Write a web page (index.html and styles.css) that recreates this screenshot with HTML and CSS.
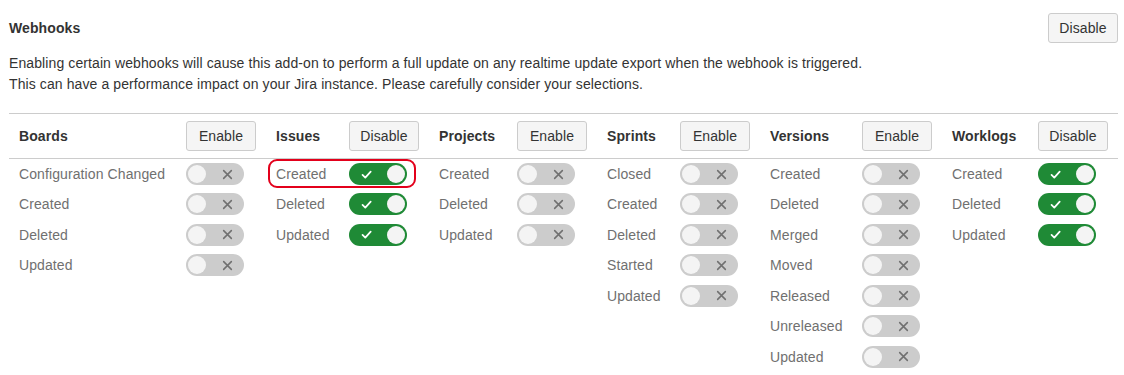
FILE: index.html
```html
<!DOCTYPE html>
<html>
<head>
<meta charset="utf-8">
<link rel="stylesheet" href="styles.css">
</head>
<body>
<div class="page">
  <div class="top">
    <h2 class="title">Webhooks</h2>
    <button class="btn">Disable</button>
  </div>
  <p class="desc">Enabling certain webhooks will cause this add-on to perform a full update on any realtime update export when the webhook is triggered.<br>This can have a performance impact on your Jira instance. Please carefully consider your selections.</p>
  <table class="hooks">
    <colgroup>
      <col class="c1"><col class="cb"><col class="c3"><col class="cb"><col class="c5"><col class="cb">
      <col class="c7"><col class="cb"><col class="c9"><col class="cb"><col class="c11"><col class="cb">
    </colgroup>
    <thead>
      <tr>
        <th>Boards</th><th><button class="btn">Enable</button></th>
        <th>Issues</th><th><button class="btn">Disable</button></th>
        <th>Projects</th><th><button class="btn">Enable</button></th>
        <th>Sprints</th><th><button class="btn">Enable</button></th>
        <th>Versions</th><th><button class="btn">Enable</button></th>
        <th>Worklogs</th><th><button class="btn">Disable</button></th>
      </tr>
    </thead>
    <tbody>
      <tr>
        <td>Configuration Changed</td><td><span class="tg off"><span class="knob"></span><svg class="ic" viewBox="0 0 10 10"><path d="M1.5 1.5L8.5 8.5M8.5 1.5L1.5 8.5"/></svg></span></td>
        <td class="hl-cell"><span class="hl"></span>Created</td><td><span class="tg on"><svg class="ic" viewBox="0 0 10 10"><path d="M1.4 5.4L3.9 7.8L8.8 2.4"/></svg><span class="knob"></span></span></td>
        <td>Created</td><td><span class="tg off"><span class="knob"></span><svg class="ic" viewBox="0 0 10 10"><path d="M1.5 1.5L8.5 8.5M8.5 1.5L1.5 8.5"/></svg></span></td>
        <td>Closed</td><td><span class="tg off"><span class="knob"></span><svg class="ic" viewBox="0 0 10 10"><path d="M1.5 1.5L8.5 8.5M8.5 1.5L1.5 8.5"/></svg></span></td>
        <td>Created</td><td><span class="tg off"><span class="knob"></span><svg class="ic" viewBox="0 0 10 10"><path d="M1.5 1.5L8.5 8.5M8.5 1.5L1.5 8.5"/></svg></span></td>
        <td>Created</td><td><span class="tg on"><svg class="ic" viewBox="0 0 10 10"><path d="M1.4 5.4L3.9 7.8L8.8 2.4"/></svg><span class="knob"></span></span></td>
      </tr>
      <tr>
        <td>Created</td><td><span class="tg off"><span class="knob"></span><svg class="ic" viewBox="0 0 10 10"><path d="M1.5 1.5L8.5 8.5M8.5 1.5L1.5 8.5"/></svg></span></td>
        <td>Deleted</td><td><span class="tg on"><svg class="ic" viewBox="0 0 10 10"><path d="M1.4 5.4L3.9 7.8L8.8 2.4"/></svg><span class="knob"></span></span></td>
        <td>Deleted</td><td><span class="tg off"><span class="knob"></span><svg class="ic" viewBox="0 0 10 10"><path d="M1.5 1.5L8.5 8.5M8.5 1.5L1.5 8.5"/></svg></span></td>
        <td>Created</td><td><span class="tg off"><span class="knob"></span><svg class="ic" viewBox="0 0 10 10"><path d="M1.5 1.5L8.5 8.5M8.5 1.5L1.5 8.5"/></svg></span></td>
        <td>Deleted</td><td><span class="tg off"><span class="knob"></span><svg class="ic" viewBox="0 0 10 10"><path d="M1.5 1.5L8.5 8.5M8.5 1.5L1.5 8.5"/></svg></span></td>
        <td>Deleted</td><td><span class="tg on"><svg class="ic" viewBox="0 0 10 10"><path d="M1.4 5.4L3.9 7.8L8.8 2.4"/></svg><span class="knob"></span></span></td>
      </tr>
      <tr>
        <td>Deleted</td><td><span class="tg off"><span class="knob"></span><svg class="ic" viewBox="0 0 10 10"><path d="M1.5 1.5L8.5 8.5M8.5 1.5L1.5 8.5"/></svg></span></td>
        <td>Updated</td><td><span class="tg on"><svg class="ic" viewBox="0 0 10 10"><path d="M1.4 5.4L3.9 7.8L8.8 2.4"/></svg><span class="knob"></span></span></td>
        <td>Updated</td><td><span class="tg off"><span class="knob"></span><svg class="ic" viewBox="0 0 10 10"><path d="M1.5 1.5L8.5 8.5M8.5 1.5L1.5 8.5"/></svg></span></td>
        <td>Deleted</td><td><span class="tg off"><span class="knob"></span><svg class="ic" viewBox="0 0 10 10"><path d="M1.5 1.5L8.5 8.5M8.5 1.5L1.5 8.5"/></svg></span></td>
        <td>Merged</td><td><span class="tg off"><span class="knob"></span><svg class="ic" viewBox="0 0 10 10"><path d="M1.5 1.5L8.5 8.5M8.5 1.5L1.5 8.5"/></svg></span></td>
        <td>Updated</td><td><span class="tg on"><svg class="ic" viewBox="0 0 10 10"><path d="M1.4 5.4L3.9 7.8L8.8 2.4"/></svg><span class="knob"></span></span></td>
      </tr>
      <tr>
        <td>Updated</td><td><span class="tg off"><span class="knob"></span><svg class="ic" viewBox="0 0 10 10"><path d="M1.5 1.5L8.5 8.5M8.5 1.5L1.5 8.5"/></svg></span></td>
        <td></td><td></td>
        <td></td><td></td>
        <td>Started</td><td><span class="tg off"><span class="knob"></span><svg class="ic" viewBox="0 0 10 10"><path d="M1.5 1.5L8.5 8.5M8.5 1.5L1.5 8.5"/></svg></span></td>
        <td>Moved</td><td><span class="tg off"><span class="knob"></span><svg class="ic" viewBox="0 0 10 10"><path d="M1.5 1.5L8.5 8.5M8.5 1.5L1.5 8.5"/></svg></span></td>
        <td></td><td></td>
      </tr>
      <tr>
        <td></td><td></td>
        <td></td><td></td>
        <td></td><td></td>
        <td>Updated</td><td><span class="tg off"><span class="knob"></span><svg class="ic" viewBox="0 0 10 10"><path d="M1.5 1.5L8.5 8.5M8.5 1.5L1.5 8.5"/></svg></span></td>
        <td>Released</td><td><span class="tg off"><span class="knob"></span><svg class="ic" viewBox="0 0 10 10"><path d="M1.5 1.5L8.5 8.5M8.5 1.5L1.5 8.5"/></svg></span></td>
        <td></td><td></td>
      </tr>
      <tr>
        <td></td><td></td>
        <td></td><td></td>
        <td></td><td></td>
        <td></td><td></td>
        <td>Unreleased</td><td><span class="tg off"><span class="knob"></span><svg class="ic" viewBox="0 0 10 10"><path d="M1.5 1.5L8.5 8.5M8.5 1.5L1.5 8.5"/></svg></span></td>
        <td></td><td></td>
      </tr>
      <tr>
        <td></td><td></td>
        <td></td><td></td>
        <td></td><td></td>
        <td></td><td></td>
        <td>Updated</td><td><span class="tg off"><span class="knob"></span><svg class="ic" viewBox="0 0 10 10"><path d="M1.5 1.5L8.5 8.5M8.5 1.5L1.5 8.5"/></svg></span></td>
        <td></td><td></td>
      </tr>
    </tbody>
  </table>
</div>
</body>
</html>
```
FILE: styles.css
```css
html, body {
  margin: 0;
  padding: 0;
  background: #fff;
}
body {
  font-family: "Liberation Sans", Arial, sans-serif;
  font-size: 14px;
  letter-spacing: 0.1px;
  color: #333;
}
.page {
  margin: 0 6px 0 9px;
  padding-top: 13px;
}
.top {
  display: flex;
  justify-content: space-between;
  align-items: center;
  height: 30px;
}
.title {
  margin: 0;
  font-size: 14px;
  font-weight: bold;
  color: #333;
}
.btn {
  width: 70px;
  height: 30px;
  box-sizing: border-box;
  padding: 0;
  margin: 0;
  background: #f5f5f5;
  border: 1px solid #ccc;
  border-radius: 3px;
  font-family: "Liberation Sans", Arial, sans-serif;
  font-size: 14px;
  letter-spacing: 0.1px;
  color: #333;
  display: block;
}
.desc {
  margin: 10px 0 0;
  line-height: 21px;
  color: #333;
}
.hooks {
  margin-top: 18px;
  width: 1109px;
  table-layout: fixed;
  border-collapse: collapse;
}
.c1 { width: 167px; }
.cb { width: 90px; }
.c3 { width: 73px; }
.c5 { width: 78px; }
.c7 { width: 73px; }
.c9 { width: 92px; }
.c11 { width: 86px; }
.hooks thead tr {
  border-top: 1px solid #ccc;
  border-bottom: 1px solid #ccc;
}
.hooks th {
  text-align: left;
  font-weight: bold;
  color: #333;
  padding: 7px 10px;
  height: 30px;
  white-space: nowrap;
}
.hooks td {
  padding: 0 10px;
  height: 30.5px;
  vertical-align: middle;
  color: #707070;
  white-space: nowrap;
}
.hooks tbody tr:first-child td {
  height: 30px;
}
.tg {
  display: flex;
  align-items: center;
  justify-content: space-between;
  width: 58px;
  height: 22px;
  box-sizing: border-box;
  border-radius: 11px;
  padding: 2px;
}
.tg.off {
  background: #ccc;
}
.tg.on {
  background: #1f8a36;
}
.knob {
  width: 18px;
  height: 18px;
  border-radius: 50%;
  background: #f4f4f4;
}
.ic {
  width: 11px;
  height: 11px;
  fill: none;
  stroke-width: 1.4;
  stroke-linecap: round;
  stroke-linejoin: round;
}
.tg.off .ic {
  stroke: #707070;
  margin-right: 9px;
}
.tg.on .ic {
  stroke: #fff;
  margin-left: 10px;
  stroke-width: 1.6;
}
.hl-cell {
  position: relative;
}
.hl {
  position: absolute;
  left: 2px;
  top: 0;
  width: 148px;
  height: 29px;
  box-sizing: border-box;
  border: 2px solid #e3001b;
  border-radius: 9px;
}
```
